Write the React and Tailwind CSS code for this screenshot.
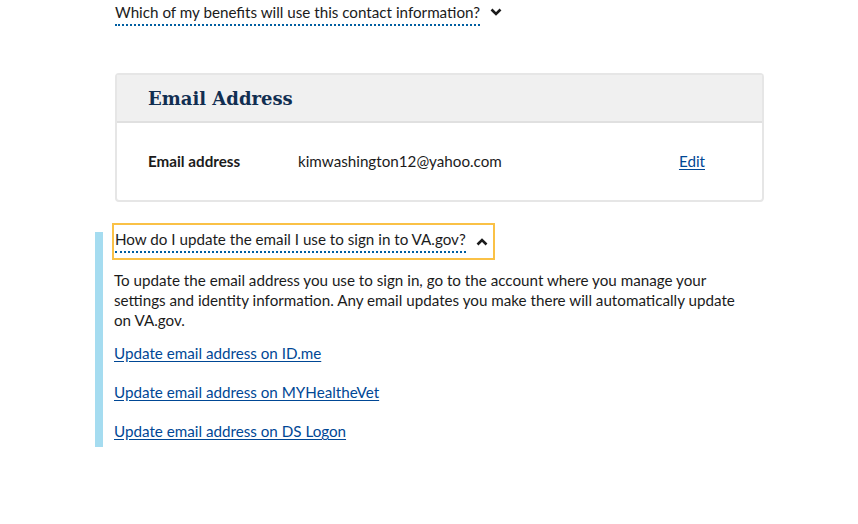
export default function App() {
  const font = { fontFamily: "Lato, 'Noto Sans', sans-serif" };
  return (
    <div className="min-h-screen bg-white text-[#1b1b1b]" style={font}>
      <div className="ml-[115px] w-[649px] pt-[2px]">
        <button className="flex items-center gap-[10px] text-[15.2px] text-[#1b1b1b]">
          <span className="border-b-2 border-dotted border-[#005ea2] pb-[2px] leading-[20px]">
            Which of my benefits will use this contact information?
          </span>
          <svg width="12" height="10" viewBox="0 0 12 10" className="mb-[4px]">
            <path d="M1.5 2.5 L6 7 L10.5 2.5" fill="none" stroke="#1b1b1b" strokeWidth="2.6" />
          </svg>
        </button>

        <div className="mt-[47px] rounded-[4px] border-2 border-[#e6e6e6]">
          <div className="flex h-[48px] items-center border-b-2 border-[#e0e0e0] bg-[#f0f0f0] pl-[31px]">
            <h2
              className="font-bold text-[#112e51]"
              style={{ fontFamily: "'DejaVu Serif', serif", fontSize: "18px" }}
            >
              Email Address
            </h2>
          </div>
          <div className="flex h-[77px] items-center pl-[31px] pr-[57px] text-[15.2px]">
            <span className="w-[150px] font-bold text-[#1b1b1b]">Email address</span>
            <span className="flex-1 text-[#1b1b1b]">kimwashington12@yahoo.com</span>
            <a href="#" className="text-[#004795] underline underline-offset-2">
              Edit
            </a>
          </div>
        </div>

        <div className="mt-[21px] -ml-[3px] inline-flex items-center gap-[10px] border-2 border-[#fac146] px-[1px] pt-[4px] pb-[5px]">
          <span className="border-b-2 border-dotted border-[#005ea2] pb-[2px] text-[15.2px] leading-[20px]">
            How do I update the email I use to sign in to VA.gov?
          </span>
          <svg width="12" height="10" viewBox="0 0 12 10" className="mt-[2px] mr-[4px]">
            <path d="M1.5 7.5 L6 3 L10.5 7.5" fill="none" stroke="#1b1b1b" strokeWidth="2.6" />
          </svg>
        </div>

        <div className="-ml-[20px] -mt-[28px] border-l-8 border-[#a5dcf0] pl-[11px] pt-[38px] pb-[6px] text-[15.2px]">
          <p className="leading-[20px] max-w-[630px]">
            To update the email address you use to sign in, go to the account where you manage your
            settings and identity information. Any email updates you make there will automatically
            update on VA.gov.
          </p>
          <div className="mt-[13px] flex flex-col gap-[19px] leading-[20px]">
            <a href="#" className="text-[#004795] underline underline-offset-2">
              Update email address on ID.me
            </a>
            <a href="#" className="text-[#004795] underline underline-offset-2">
              Update email address on MYHealtheVet
            </a>
            <a href="#" className="text-[#004795] underline underline-offset-2">
              Update email address on DS Logon
            </a>
          </div>
        </div>
      </div>
    </div>
  );
}
